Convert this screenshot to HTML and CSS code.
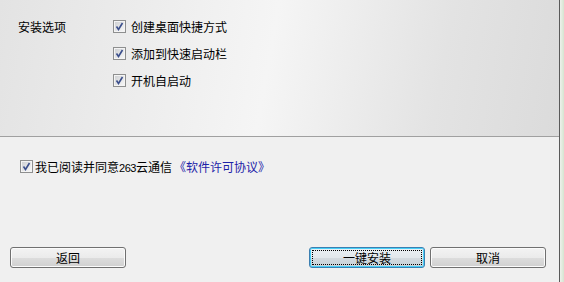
FILE: index.html
```html
<!DOCTYPE html>
<html>
<head>
<meta charset="utf-8">
<link rel="stylesheet" href="styles.css">
</head>
<body>
<div class="window">
  <div class="main">
    <div class="options">
      <div class="label">安装选项</div>
      <div class="checks">
        <div class="row"><span class="cb"><svg width="13" height="13" viewBox="0 0 13 13"><defs><linearGradient id="g" x1="0" y1="0" x2="1" y2="1"><stop offset="0" stop-color="#cfd1d4"/><stop offset="1" stop-color="#f6f6f6"/></linearGradient></defs><rect x="0.5" y="0.5" width="12" height="12" fill="#f4f4f4" stroke="#8e8f8f"/><rect x="2" y="2" width="9" height="9" fill="url(#g)"/><path d="M3.5 6.5 L5.5 9.5 L9.5 3" fill="none" stroke="#3b4f8c" stroke-width="1.6"/></svg></span><span>创建桌面快捷方式</span></div>
        <div class="row"><span class="cb"><svg width="13" height="13" viewBox="0 0 13 13"><rect x="0.5" y="0.5" width="12" height="12" fill="#f4f4f4" stroke="#8e8f8f"/><rect x="2" y="2" width="9" height="9" fill="url(#g)"/><path d="M3.5 6.5 L5.5 9.5 L9.5 3" fill="none" stroke="#3b4f8c" stroke-width="1.6"/></svg></span><span>添加到快速启动栏</span></div>
        <div class="row"><span class="cb"><svg width="13" height="13" viewBox="0 0 13 13"><rect x="0.5" y="0.5" width="12" height="12" fill="#f4f4f4" stroke="#8e8f8f"/><rect x="2" y="2" width="9" height="9" fill="url(#g)"/><path d="M3.5 6.5 L5.5 9.5 L9.5 3" fill="none" stroke="#3b4f8c" stroke-width="1.6"/></svg></span><span>开机自启动</span></div>
      </div>
    </div>
    <div class="bottom">
      <div class="agree"><span class="cb"><svg width="13" height="13" viewBox="0 0 13 13"><rect x="0.5" y="0.5" width="12" height="12" fill="#f4f4f4" stroke="#8e8f8f"/><rect x="2" y="2" width="9" height="9" fill="url(#g)"/><path d="M3.5 6.5 L5.5 9.5 L9.5 3" fill="none" stroke="#3b4f8c" stroke-width="1.6"/></svg></span><span>我已阅读并同意<span class="num">263</span>云通信</span><span class="link">《软件许可协议》</span></div>
      <div class="buttons">
        <button class="btn">返回</button>
        <div class="right">
          <button class="btn focus"><span class="focusring">一键安装</span></button>
          <button class="btn">取消</button>
        </div>
      </div>
    </div>
  </div>
  <div class="edge"></div>
  <div class="green"></div>
</div>
</body>
</html>
```
FILE: styles.css
```css
html, body {
  margin: 0;
  padding: 0;
  width: 564px;
  height: 282px;
  overflow: hidden;
  font-family: "Noto Sans CJK SC", "Liberation Sans", sans-serif;
  font-size: 12px;
  color: #000;
}
.window {
  display: flex;
  width: 564px;
  height: 282px;
}
.main {
  width: 559px;
  display: flex;
  flex-direction: column;
  background: #f0f0f0;
}
.edge {
  width: 1px;
  background: #5a5a5a;
}
.green {
  width: 4px;
  background: linear-gradient(90deg, #eef2ec, #d6e4d0);
}
.options {
  box-sizing: border-box;
  border-bottom: 1px solid #a0a0a0;
  height: 137px;
  background: linear-gradient(100deg, #e3e3e3 0%, #f5f5f5 48%, #e3e3e3 78%, #dbdbdb 100%);
  display: flex;
  padding: 13px 0 0 18px;
}
.label {
  width: 95px;
  height: 27px;
  line-height: 27px;
}
.checks {
  display: flex;
  flex-direction: column;
}
.row {
  height: 27px;
  display: flex;
  align-items: center;
}
.cb {
  width: 13px;
  height: 13px;
  display: inline-flex;
  margin-right: 5px;
}
.cb svg { display: block; }
.bottom {
  flex: 1;
  display: flex;
  flex-direction: column;
  padding: 23px 0 14px 0;
}
.agree {
  display: flex;
  align-items: center;
  height: 13px;
  padding-left: 20px;
}
.agree .cb { margin-right: 2px; }
.num {
  font-family: "Liberation Sans", sans-serif;
  font-size: 11px;
  letter-spacing: -0.5px;
}
.link {
  color: #1c22a8;
  margin-left: 2px;
}
.buttons {
  margin-top: auto;
  display: flex;
  justify-content: space-between;
  padding: 0 13px 0 10px;
}
.right {
  display: flex;
  gap: 5px;
}
.btn {
  width: 116px;
  height: 21px;
  box-sizing: border-box;
  border: 1px solid #707070;
  border-radius: 3px;
  background: linear-gradient(180deg, #f3f3f3 0%, #ebebeb 50%, #dddddd 51%, #d0d0d0 100%);
  box-shadow: inset 0 0 0 1px #fbfbfb;
  font-family: "Noto Sans CJK SC", sans-serif;
  font-size: 12px;
  color: #000;
  padding: 0;
  display: flex;
  align-items: center;
  justify-content: center;
  line-height: 1;
}
.btn.focus {
  border-color: #3c7fb1;
  background: linear-gradient(180deg, #eaf0f4 0%, #e2e8ec 50%, #d4dbe0 51%, #c9d1d7 100%);
  box-shadow: inset 0 0 0 1px #48d0f8;
  padding: 2px;
}
.focusring {
  flex: 1;
  align-self: stretch;
  border: 1px dotted #000;
  display: flex;
  align-items: center;
  justify-content: center;
}
```
